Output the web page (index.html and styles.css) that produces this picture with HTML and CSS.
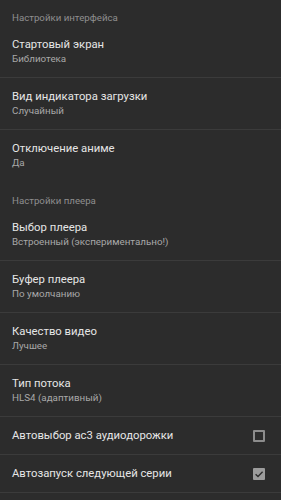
FILE: index.html
```html
<!DOCTYPE html>
<html lang="ru">
<head>
<meta charset="utf-8">
<link rel="stylesheet" href="styles.css">
</head>
<body>
<div class="screen">
  <div class="header first">Настройки интерфейса</div>
  <div class="row"><div class="title">Стартовый экран</div><div class="sub">Библиотека</div></div>
  <div class="divider"></div>
  <div class="row"><div class="title">Вид индикатора загрузки</div><div class="sub">Случайный</div></div>
  <div class="divider"></div>
  <div class="row"><div class="title">Отключение аниме</div><div class="sub">Да</div></div>
  <div class="header second">Настройки плеера</div>
  <div class="row"><div class="title">Выбор плеера</div><div class="sub">Встроенный (экспериментально!)</div></div>
  <div class="divider"></div>
  <div class="row"><div class="title">Буфер плеера</div><div class="sub">По умолчанию</div></div>
  <div class="divider"></div>
  <div class="row"><div class="title">Качество видео</div><div class="sub">Лучшее</div></div>
  <div class="divider"></div>
  <div class="row"><div class="title">Тип потока</div><div class="sub">HLS4 (адаптивный)</div></div>
  <div class="divider"></div>
  <div class="row check-row"><div class="title">Автовыбор ac3 аудиодорожки</div><span class="box"></span></div>
  <div class="divider"></div>
  <div class="row check-row"><div class="title">Автозапуск следующей серии</div><span class="box checked"><svg viewBox="0 0 12 12" width="12" height="12"><path d="M2.6 6.2 L5 8.5 L9.6 3.8" fill="none" stroke="#2e2e2e" stroke-width="1.4"/></svg></span></div>
  <div class="divider"></div>
</div>
</body>
</html>
```

FILE: styles.css
```css
html, body {
  margin: 0;
  padding: 0;
  background: #2c2c2c;
}
body {
  font-family: Roboto, "Noto Sans", sans-serif;
  width: 281px;
  height: 500px;
  overflow: hidden;
}
.screen {
  display: flex;
  flex-direction: column;
}
.header {
  color: #8f8f8f;
  font-size: 9.7px;
  line-height: 12px;
  padding: 12px 12px 2px;
  height: 12px;
}
.header.second {
  padding-top: 14px;
}
.row {
  padding: 11px 12px 12px;
  display: flex;
  flex-direction: column;
}
.title {
  color: #e6e6e6;
  font-size: 11.3px;
  line-height: 16px;
}
.sub {
  color: #a8a8a8;
  font-size: 9.8px;
  line-height: 12px;
}
.check-row {
  flex-direction: row;
  align-items: center;
  justify-content: space-between;
  height: 37px;
  padding: 0 16px 0 12px;
  box-sizing: border-box;
}
.box {
  width: 12px;
  height: 12px;
  box-sizing: border-box;
  border: 2px solid #8c8c8c;
  border-radius: 1px;
  display: flex;
  align-items: center;
  justify-content: center;
}
.box.checked {
  background: #9c9c9c;
  border: none;
}
.divider {
  height: 1px;
  background: #3b3b3b;
}
```
